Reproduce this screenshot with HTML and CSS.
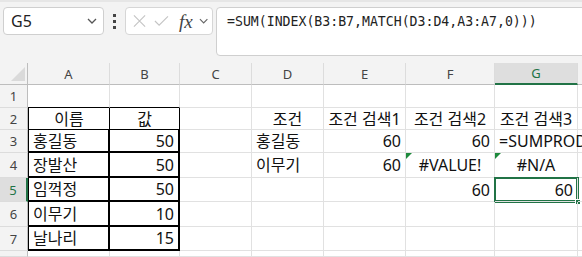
FILE: index.html
```html
<!DOCTYPE html>
<html lang="ko">
<head>
    <meta charset="UTF-8">
    <title>Sheet</title>
    <link rel="stylesheet" href="styles.css">
</head>
<body>
    <div class="bar">
        <div class="namebox">
            <span class="ref">G5</span>
            <svg class="chev" width="10" height="6" viewBox="0 0 10 6"><path d="M1 1l4 4 4-4" fill="none" stroke="#555" stroke-width="1.3"/></svg>
        </div>
        <div class="dots"><i></i><i></i><i></i></div>
        <div class="fxbox">
            <svg width="14" height="14" viewBox="0 0 14 14"><path d="M1 1l12 12M13 1L1 13" stroke="#c4c4c4" stroke-width="1.2"/></svg>
            <svg width="16" height="12" viewBox="0 0 16 12"><path d="M1 6l4.5 4.5L15 1" fill="none" stroke="#c4c4c4" stroke-width="1.2"/></svg>
            <span class="fx">fx</span>
            <svg width="10" height="6" viewBox="0 0 10 6"><path d="M1 1l4 4 4-4" fill="none" stroke="#666" stroke-width="1.2"/></svg>
        </div>
        <div class="formula">=SUM(INDEX(B3:B7,MATCH(D3:D4,A3:A7,0)))</div>
    </div>

    <div class="sheet">
        <!-- column headers -->
        <div class="hd corner"><span class="tri"></span></div>
        <div class="hd">A</div>
        <div class="hd">B</div>
        <div class="hd">C</div>
        <div class="hd">D</div>
        <div class="hd">E</div>
        <div class="hd">F</div>
        <div class="hd on">G</div>
        <div class="hd"></div>

        <!-- row 1 -->
        <div class="rh">1</div>
        <div class="c tt"></div>
        <div class="c tt"></div>
        <div class="c"></div>
        <div class="c"></div>
        <div class="c"></div>
        <div class="c"></div>
        <div class="c"></div>
        <div class="c"></div>

        <!-- row 2 -->
        <div class="rh">2</div>
        <div class="c th tl m">이름</div>
        <div class="c th m">값</div>
        <div class="c"></div>
        <div class="c m">조건</div>
        <div class="c m">조건 검색1</div>
        <div class="c m">조건 검색2</div>
        <div class="c m">조건 검색3</div>
        <div class="c"></div>

        <!-- row 3 -->
        <div class="rh">3</div>
        <div class="c tb tl">홍길동</div>
        <div class="c tb r">50</div>
        <div class="c"></div>
        <div class="c">홍길동</div>
        <div class="c r">60</div>
        <div class="c r">60</div>
        <div class="c spill">=SUMPROD</div>
        <div class="c"></div>

        <!-- row 4 -->
        <div class="rh">4</div>
        <div class="c tb tl">장발산</div>
        <div class="c tb r">50</div>
        <div class="c"></div>
        <div class="c">이무기</div>
        <div class="c r">60</div>
        <div class="c m err">#VALUE!</div>
        <div class="c m err">#N/A</div>
        <div class="c"></div>

        <!-- row 5 -->
        <div class="rh on">5</div>
        <div class="c tb tl">임꺽정</div>
        <div class="c tb r">50</div>
        <div class="c"></div>
        <div class="c"></div>
        <div class="c"></div>
        <div class="c r">60</div>
        <div class="c r sel">60<span class="handle"></span></div>
        <div class="c"></div>

        <!-- row 6 -->
        <div class="rh">6</div>
        <div class="c tb tl">이무기</div>
        <div class="c tb r">10</div>
        <div class="c"></div>
        <div class="c"></div>
        <div class="c"></div>
        <div class="c"></div>
        <div class="c"></div>
        <div class="c"></div>

        <!-- row 7 -->
        <div class="rh">7</div>
        <div class="c tb tl">날나리</div>
        <div class="c tb r">15</div>
        <div class="c"></div>
        <div class="c"></div>
        <div class="c"></div>
        <div class="c"></div>
        <div class="c"></div>
        <div class="c"></div>

        <!-- row 8 -->
        <div class="rh"></div>
        <div class="c"></div>
        <div class="c"></div>
        <div class="c"></div>
        <div class="c"></div>
        <div class="c"></div>
        <div class="c"></div>
        <div class="c"></div>
        <div class="c"></div>
    </div>
</body>
</html>
```

FILE: styles.css
```css
*{
    padding: 0;
    margin: 0;
    box-sizing: border-box;
}
body{
    width: 582px;
    height: 257px;
    overflow: hidden;
    background: #ffffff;
    font-family: "Noto Sans", "Noto Sans CJK KR", sans-serif;
}
.bar{
    height: 63px;
    background: #f3f3f3;
    border-top: 2px solid #e6e6e6;
    display: flex;
    align-items: flex-start;
    padding: 5px 0 0 3px;
}
.namebox{
    width: 101px;
    height: 28px;
    background: #ffffff;
    border: 1px solid #cfcfcf;
    border-radius: 4px;
    display: flex;
    align-items: center;
    justify-content: space-between;
    padding: 0 6px 0 7px;
}
.namebox .ref{
    font-size: 16px;
    color: #222222;
}
.dots{
    width: 21px;
    height: 28px;
    display: flex;
    flex-direction: column;
    align-items: center;
    justify-content: center;
    gap: 3px;
}
.dots i{
    display: block;
    width: 3px;
    height: 3px;
    background: #444444;
}
.fxbox{
    width: 88px;
    height: 28px;
    background: #ffffff;
    border: 1px solid #d6d6d6;
    border-radius: 4px;
    display: flex;
    align-items: center;
    gap: 8px;
    padding: 0 4px 0 7px;
}
.fxbox .fx{
    font-family: "Liberation Serif", serif;
    font-style: italic;
    font-size: 19px;
    color: #444444;
    margin: 0 -2px 0 2px;
    line-height: 1;
}
.formula{
    flex: 1;
    margin-left: 3px;
    margin-right: -10px;
    height: 49px;
    background: #ffffff;
    border: 1px solid #cfcfcf;
    border-radius: 4px;
    font-family: "DejaVu Sans Mono", monospace;
    font-size: 13.2px;
    color: #222222;
    padding: 6px 0 0 10px;
}
.sheet{
    display: grid;
    grid-template-columns: 28px 82px 70px 72px 72px 82px 89px 83px 1fr;
    grid-template-rows: 22px 23px 22px 23px 25px 24px 25px 24px 1fr;
    height: 194px;
    font-family: "Noto Sans", "Noto Sans CJK KR", sans-serif;
    font-size: 16px;
    color: #111111;
}
.hd{
    background: #f3f3f3;
    border-right: 1px solid #dcdcdc;
    border-bottom: 1px solid #bdbdbd;
    font-family: "Noto Sans", sans-serif;
    font-size: 13px;
    color: #444444;
    display: flex;
    align-items: center;
    justify-content: center;
}
.hd.corner{
    border-right-color: #bdbdbd;
    position: relative;
}
.tri{
    position: absolute;
    right: 2px;
    bottom: 3px;
    width: 0;
    height: 0;
    border-left: 14px solid transparent;
    border-bottom: 14px solid #dadada;
}
.hd.on{
    background: #dedede;
    border-bottom: 2px solid #217346;
    color: #217346;
}
.rh{
    background: #f3f3f3;
    border-right: 1px solid #bdbdbd;
    border-bottom: 1px solid #dcdcdc;
    font-family: "Noto Sans", sans-serif;
    font-size: 13px;
    color: #444444;
    display: flex;
    align-items: center;
    justify-content: center;
}
.rh.on{
    background: #dedede;
    border-right: 2px solid #217346;
    color: #217346;
}
.c{
    border-right: 1px solid #e1e1e1;
    border-bottom: 1px solid #e1e1e1;
    display: flex;
    align-items: center;
    padding: 0 4px;
    white-space: nowrap;
    line-height: 1;
    position: relative;
}
.c.r{
    justify-content: flex-end;
}
.c.m{
    justify-content: center;
}
.c.tt{
    border-bottom-color: #000000;
}
.c.th{
    border-right-color: #000000;
    border-bottom-color: #000000;
}
.c.tb{
    border-right: 2px solid #000000;
    border-bottom: 2px solid #000000;
}
.c.tl{
    border-left: 1px solid #000000;
}
.spill{
    overflow: visible;
}
.err::before{
    content: "";
    position: absolute;
    left: 0;
    top: 0;
    border-top: 6px solid #1e8a3c;
    border-right: 6px solid transparent;
}
.sel{
    box-shadow: 0 0 0 1px #217346, inset 0 0 0 1px #217346;
}
.handle{
    position: absolute;
    right: -4px;
    bottom: -4px;
    width: 6px;
    height: 6px;
    background: #217346;
    border: 1px solid #ffffff;
}
```
